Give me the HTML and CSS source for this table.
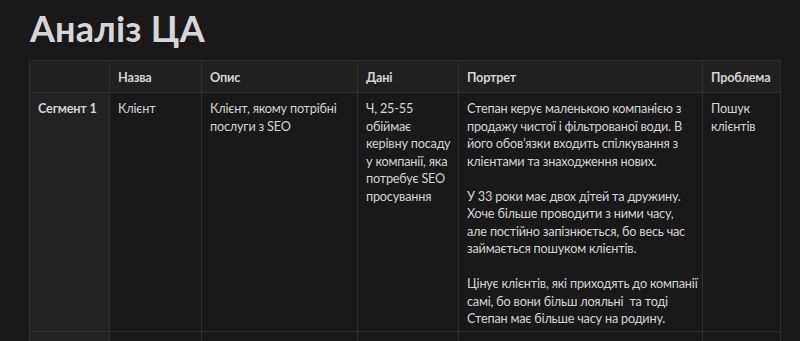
FILE: index.html
```html
<!DOCTYPE html>
<html lang="uk">
<head>
<meta charset="utf-8">
<link rel="stylesheet" href="styles.css">
</head>
<body>
<div class="page">
  <h1 class="title">Аналіз ЦА</h1>
  <table class="grid">
    <colgroup>
      <col class="c1"><col class="c2"><col class="c3"><col class="c4"><col class="c5"><col class="c6">
    </colgroup>
    <thead>
      <tr>
        <th class="first"></th>
        <th>Назва</th>
        <th>Опис</th>
        <th>Дані</th>
        <th>Портрет</th>
        <th>Проблема</th>
      </tr>
    </thead>
    <tbody>
      <tr>
        <td class="first">Сегмент 1</td>
        <td>Клієнт</td>
        <td>Клієнт, якому потрібні<br>послуги з SEO</td>
        <td>Ч, 25-55<br>обіймає<br>керівну посаду<br>у компанії, яка<br>потребує SEO<br>просування</td>
        <td>Степан керує маленькою компанією з<br>продажу чистої і фільтрованої води. В<br>його обов’язки входить спілкування з<br>клієнтами та знаходження нових.<br><br>У 33 роки має двох дітей та дружину.<br>Хоче більше проводити з ними часу,<br>але постійно запізнюється, бо весь час<br>займається пошуком клієнтів.<br><br>Цінує клієнтів, які приходять до компанії<br>самі, бо вони більш лояльні&nbsp; та тоді<br>Степан має більше часу на родину.</td>
        <td>Пошук<br>клієнтів</td>
      </tr>
      <tr class="next">
        <td class="first"></td>
        <td></td>
        <td></td>
        <td></td>
        <td></td>
        <td></td>
      </tr>
    </tbody>
  </table>
</div>
</body>
</html>
```

FILE: styles.css
```css
html, body {
  margin: 0;
  padding: 0;
  background: #191919;
}
body {
  font-family: Lato, "Noto Sans", sans-serif;
  color: #d4d4d4;
  overflow: hidden;
}
.page {
  padding: 6.5px 0 0 29px;
}
.title {
  margin: 0 0 11.5px 1px;
  font-size: 36px;
  line-height: 42px;
  font-weight: 700;
  color: #d6d6d6;
  letter-spacing: 0.2px;
}
.grid {
  border-collapse: collapse;
  table-layout: fixed;
  width: 752px;
  font-size: 12.7px;
  line-height: 17.5px;
  letter-spacing: -0.2px;
}
.c1 { width: 80px; }
.c2 { width: 92px; }
.c3 { width: 156px; }
.c4 { width: 101px; }
.c5 { width: 244px; }
.c6 { width: 78px; }
.grid th, .grid td {
  border: 1px solid #2f2f2f;
  padding: 7px 8px 3px 8px;
  vertical-align: top;
  text-align: left;
  white-space: nowrap;
}
.grid th {
  background: #202020;
  font-weight: 700;
  line-height: 18px;
  padding-top: 7px;
  padding-bottom: 6px;
}
.grid td.first {
  background: #222222;
  font-weight: 700;
}
.grid th.first {
  background: #202020;
}
.grid .next td {
  height: 40px;
}
```
